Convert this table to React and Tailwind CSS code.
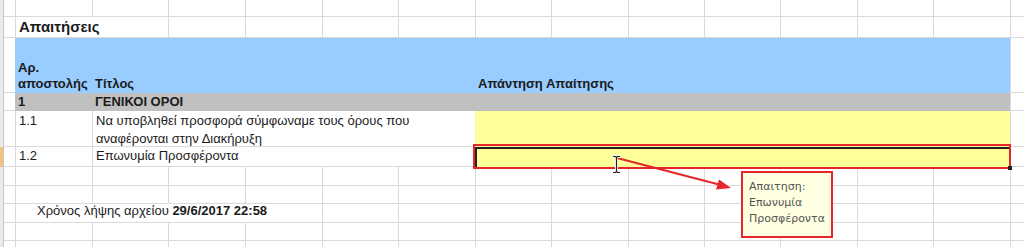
import React from 'react';

// sheet gridline + cell helpers
const ln = 'border-l border-b border-[#dadada]';
const txt = 'px-[3px] whitespace-nowrap overflow-visible';

const Blank = ({ n }) =>
  Array.from({ length: n }, (_, i) => <div key={i} className={ln} />);

const RowHead = ({ active }) => (
  <>
    <div className={`border-r border-[#c6c6c6] ${active ? 'bg-[#f5c27e]' : 'bg-[#ebebeb]'}`} />
    <div className="border-b border-[#dadada]" />
  </>
);

const Cursor = () => (
  <svg className="absolute left-[611px] top-[155px]" width="11" height="19" viewBox="0 0 11 19">
    <path d="M2 1.5h2.5l1 1 1-1H9M5.5 2.5v14M2 17.5h2.5l1-1 1 1H9" fill="none" stroke="#fff" strokeWidth="3" />
    <path d="M2 1.5h2.5l1 1 1-1H9M5.5 2.5v14M2 17.5h2.5l1-1 1 1H9" fill="none" stroke="#222" strokeWidth="1.2" />
  </svg>
);

const Arrow = () => (
  <svg className="absolute left-0 top-0 pointer-events-none" width="1024" height="247">
    <line x1="617" y1="158" x2="719" y2="184.5" stroke="#e5262b" strokeWidth="2" />
    <polygon points="731,188 716,189.5 719,179.5" fill="#e5262b" />
  </svg>
);

export default function App() {
  return (
    <div className="relative w-[1024px] h-[247px] overflow-hidden bg-white font-['Liberation_Sans',Arial,sans-serif] text-[13px] text-[#1b1b1b]">
      <div className="grid grid-cols-[4px_11px_77px_76px_77px_77px_76px_77px_76px_77px_76px_76px_77px_76px_77px_1fr] grid-rows-[17px_21px_55px_18px_36px_20px_19px_18px_19px_18px_18px]">
        {/* top row */}
        <RowHead />
        <Blank n={14} />

        {/* sheet title */}
        <RowHead />
        <div className={`${ln} col-span-2 flex items-end pb-[1px] ${txt} text-[15px] leading-[18px] font-bold`}>
          Απαιτήσεις
        </div>
        <Blank n={12} />

        {/* column headings */}
        <RowHead />
        <div className={`bg-[#99ccff] flex items-end pb-[1px] ${txt} font-bold leading-[16px]`}>
          <div>
            Αρ.
            <br />
            αποστολής
          </div>
        </div>
        <div className={`col-span-5 bg-[#99ccff] flex items-end pb-[1px] ${txt} font-bold leading-[16px]`}>
          Τίτλος
        </div>
        <div className={`col-span-7 bg-[#99ccff] flex items-end pb-[1px] ${txt} font-bold leading-[16px]`}>
          Απάντηση Απαίτησης
        </div>
        <div className={ln} />

        {/* section */}
        <RowHead />
        <div className={`bg-[#c0c0c0] flex items-end pb-[1px] ${txt} font-bold leading-[17px]`}>1</div>
        <div className={`col-span-12 bg-[#c0c0c0] flex items-end pb-[1px] ${txt} font-bold leading-[17px]`}>
          ΓΕΝΙΚΟΙ ΟΡΟΙ
        </div>
        <div className={ln} />

        {/* 1.1 */}
        <RowHead />
        <div className={`${ln} ${txt} leading-[18px] pt-[1px]`}>1.1</div>
        <div className={`${ln} col-span-5 ${txt} leading-[18px] pt-[1px]`}>
          Να υποβληθεί προσφορά σύμφωναμε τους όρους που
          <br />
          αναφέρονται στην Διακήρυξη
        </div>
        <div className="col-span-7 bg-[#ffff99]" />
        <div className={ln} />

        {/* 1.2 */}
        <RowHead active />
        <div className={`${ln} flex items-end ${txt} leading-[18px] pb-[1px]`}>1.2</div>
        <div className={`${ln} col-span-5 flex items-end ${txt} leading-[18px] pb-[1px]`}>
          Επωνυμία Προσφέροντα
        </div>
        <div className="col-span-7 relative bg-[#ffff99]">
          <div className="absolute inset-0 border-t-2 border-l-2 border-[#222]" />
          <div className="absolute -left-[2px] -right-[1px] -top-[3px] -bottom-[2px] border-2 border-[#e5262b]" />
          <div className="absolute -right-[2px] -bottom-[3px] w-[4px] h-[4px] bg-[#222]" />
        </div>
        <div className={ln} />

        <RowHead />
        <Blank n={14} />
        <RowHead />
        <Blank n={14} />

        {/* download time */}
        <RowHead />
        <div className={`${ln} col-span-4 flex items-end pb-[2px] pl-[21px] whitespace-nowrap leading-[18px]`}>
          Χρόνος λήψης αρχείου&nbsp;<span className="font-bold">29/6/2017 22:58</span>
        </div>
        <Blank n={10} />

        <RowHead />
        <Blank n={14} />
        <RowHead />
        <Blank n={14} />
      </div>

      <Arrow />
      <Cursor />

      {/* cell comment */}
      <div className="absolute left-[741px] top-[171px] w-[92px] h-[67px] border-2 border-[#e5262b] bg-[#ffffe1] px-[6px] pt-[6px] font-['DejaVu_Sans',sans-serif] text-[11px] leading-[16px] text-[#555]">
        Απαιτηση:
        <br />
        Επωνυμία
        <br />
        Προσφέροντα
      </div>
    </div>
  );
}
